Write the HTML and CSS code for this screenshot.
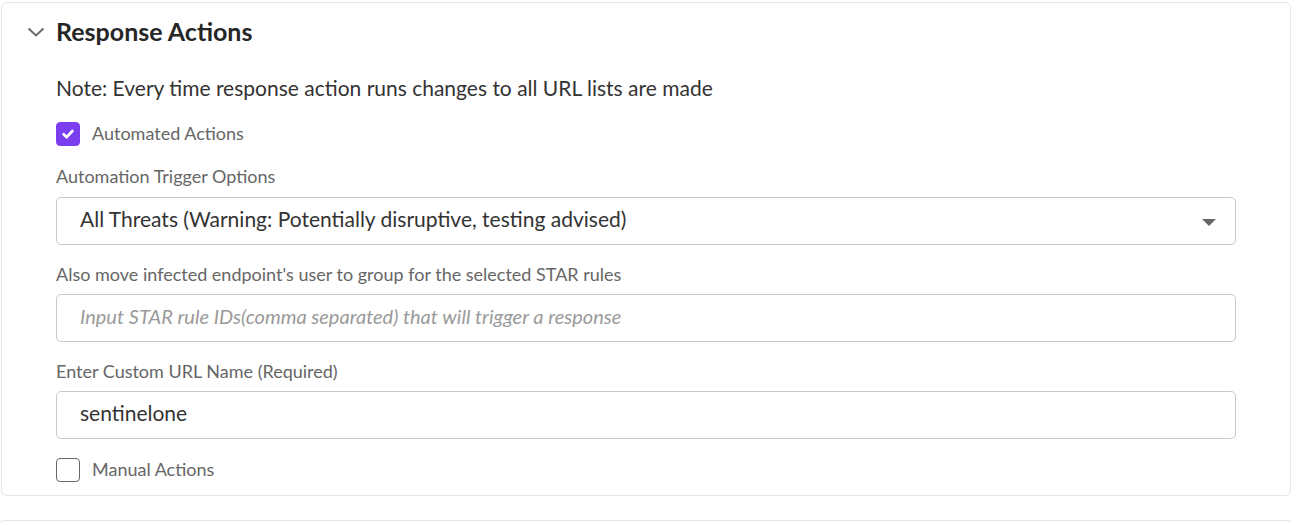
FILE: index.html
```html
<!DOCTYPE html>
<html>
<head>
<meta charset="utf-8">
<link rel="stylesheet" href="styles.css">
</head>
<body>
<section class="card">
  <header class="card-header">
    <svg class="chevron" width="18" height="10" viewBox="0 0 18 10"><path d="M1.5 1.5 L9 8.5 L16.5 1.5" fill="none" stroke="#6b6b6b" stroke-width="2"/></svg>
    <h2 class="title">Response Actions</h2>
  </header>
  <div class="card-body">
    <p class="note">Note: Every time response action runs changes to all URL lists are made</p>
    <label class="check-row">
      <span class="box checked"><svg width="14" height="14" viewBox="0 0 14 14"><path d="M2.6 7.3 L5.7 10.2 L11.4 4" fill="none" stroke="#fff" stroke-width="2.7" stroke-linecap="round" stroke-linejoin="round"/></svg></span>
      <span class="check-label">Automated Actions</span>
    </label>
    <div class="field-label first">Automation Trigger Options</div>
    <div class="control select">
      <span class="value">All Threats (Warning: Potentially disruptive, testing advised)</span>
      <span class="caret"></span>
    </div>
    <div class="field-label">Also move infected endpoint's user to group for the selected STAR rules</div>
    <div class="control"><span class="placeholder">Input STAR rule IDs(comma separated) that will trigger a response</span></div>
    <div class="field-label">Enter Custom URL Name (Required)</div>
    <div class="control"><span class="value">sentinelone</span></div>
    <label class="check-row last">
      <span class="box"></span>
      <span class="check-label">Manual Actions</span>
    </label>
  </div>
</section>
<section class="card next"></section>
</body>
</html>
```
FILE: styles.css
```css
html, body { margin: 0; padding: 0; background: #fff; }
body {
  font-family: Lato, "Open Sans", sans-serif;
  padding: 2px 9px 0 1px;
  box-sizing: border-box;
  height: 525px;
  overflow: hidden;
}
.card {
  border: 1px solid #e6e6e6;
  border-radius: 6px;
  background: #fff;
}
.card.next { margin-top: 24px; height: 2px; border-bottom: none; border-radius: 6px 6px 0 0; }
.card-header {
  display: flex;
  align-items: center;
  padding: 13px 0 0 25px;
  height: 30px;
}
.chevron { margin-right: 11px; margin-top: 2px; }
.title {
  margin: 0;
  font-size: 25px;
  font-weight: 700;
  color: #262626;
  line-height: 30px;
}
.card-body {
  display: flex;
  flex-direction: column;
  padding: 30px 54px 13px 54px;
}
.note {
  margin: 0;
  font-size: 21px;
  line-height: 24px;
  color: #333;
}
.check-row {
  display: flex;
  align-items: center;
  gap: 12px;
  margin-top: 22px;
  height: 24px;
}
.check-row.last { margin-top: 19px; }
.box {
  width: 24px;
  height: 24px;
  box-sizing: border-box;
  border: 1.5px solid #666;
  border-radius: 4px;
  display: flex;
  align-items: center;
  justify-content: center;
}
.box.checked { background: #7c3ff0; border-color: #7c3ff0; }
.check-label { font-size: 18px; color: #666; line-height: 20px; padding-bottom: 3px; }
.field-label {
  font-size: 18px;
  color: #666;
  line-height: 20px;
  margin-top: 19px;
}
.field-label.first { margin-top: 20px; }
.control {
  margin-top: 10px;
  height: 48px;
  box-sizing: border-box;
  border: 1px solid #c8c8c8;
  border-radius: 5px;
  display: flex;
  align-items: center;
  padding: 0 19px 0 23px;
}
.control.select { margin-top: 11px; }
.value { font-size: 21px; color: #333; flex: 1; padding-bottom: 5px; }
.placeholder { font-size: 20px; color: #9a9a9a; font-style: italic; padding-bottom: 5px; }
.caret {
  width: 0; height: 0;
  border-left: 7.5px solid transparent;
  border-right: 7.5px solid transparent;
  border-top: 7px solid #666;
  margin-top: 2px;
}
```
